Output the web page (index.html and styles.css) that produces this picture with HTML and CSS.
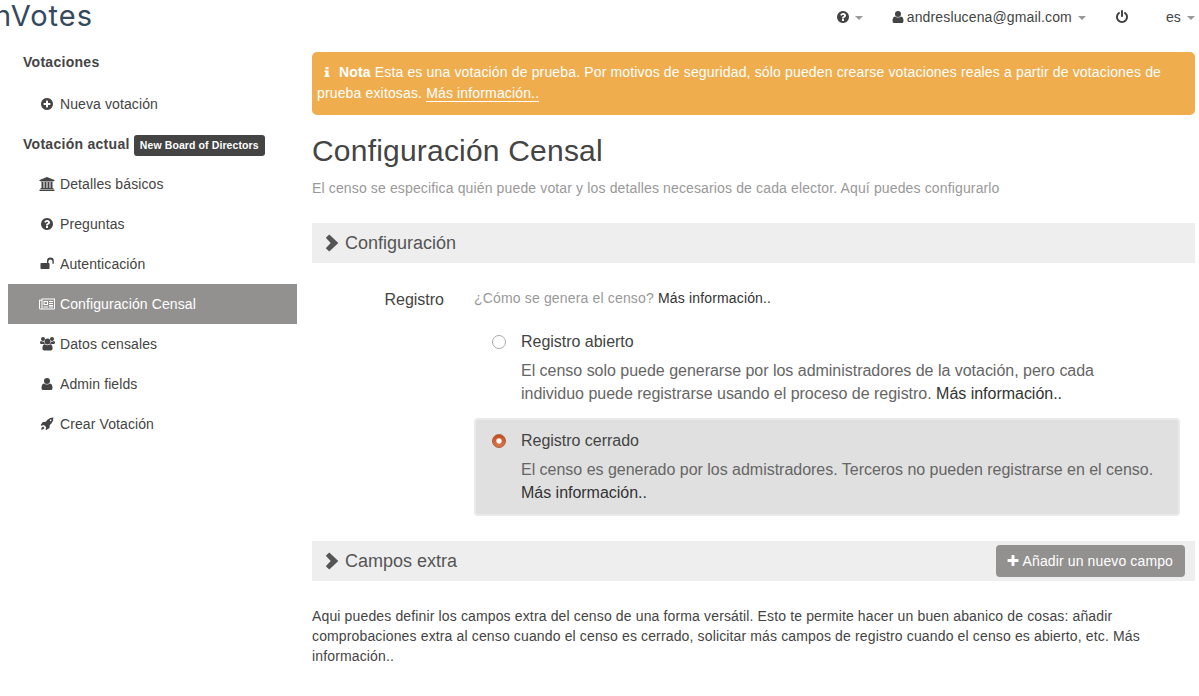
FILE: index.html
```html
<!DOCTYPE html>
<html lang="es">
<head>
<meta charset="utf-8">
<title>nVotes - Configuración Censal</title>
<link rel="stylesheet" href="styles.css">
</head>
<body>
<svg class="sprite" aria-hidden="true">
  <symbol id="question" viewBox="0 0 1792 1792"><path d="M1024 1376v-192q0-14-9-23t-23-9h-192q-14 0-23 9t-9 23v192q0 14 9 23t23 9h192q14 0 23-9t9-23zm256-672q0-88-55.500-163t-138.500-116-170-41q-243 0-371 213-15 24 8 42l132 100q7 6 19 6 16 0 25-12 53-68 86-92 34-24 86-24 48 0 85.500 26t37.500 59q0 38-20 61t-68 45q-63 28-115.500 86.500t-52.500 125.500v36q0 14 9 23t23 9h192q14 0 23-9t9-23q0-19 21.500-49.500t54.500-49.500q32-18 49-28.500t46-35 44.500-48 28-60.500 12.500-81zm384 192q0 209-103 385.500t-279.500 279.500-385.500 103-385.500-103-279.500-279.500-103-385.500 103-385.500 279.500-279.500 385.500-103 385.500 103 279.500 279.500 103 385.500z"/></symbol>
  <symbol id="plus-circle" viewBox="0 0 1792 1792"><path d="M1344 960v-128q0-26-19-45t-45-19h-256v-256q0-26-19-45t-45-19h-128q-26 0-45 19t-19 45v256h-256q-26 0-45 19t-19 45v128q0 26 19 45t45 19h256v256q0 26 19 45t45 19h128q26 0 45-19t19-45v-256h256q26 0 45-19t19-45zm320-64q0 209-103 385.500t-279.500 279.500-385.500 103-385.500-103-279.500-279.500-103-385.500 103-385.500 279.500-279.500 385.500-103 385.500 103 279.500 279.500 103 385.500z"/></symbol>
  <symbol id="power" viewBox="0 0 1792 1792"><path d="M1664 896q0 156-61 298t-164 245-245 164-298 61-298-61-245-164-164-245-61-298q0-182 80.500-343t226.500-270q43-32 95.500-25t83.500 50q32 42 24.500 94.500t-49.500 84.500q-98 74-151.500 181t-53.500 228q0 104 40.500 198.500t109.500 163.500 163.500 109.500 198.500 40.500 198.500-40.500 163.500-109.500 109.500-163.500 40.500-198.500q0-121-53.500-228t-151.500-181q-42-32-49.500-84.500t24.500-94.500q31-43 84-50t95 25q146 109 226.500 270t80.500 343zm-640-768v640q0 52-38 90t-90 38-90-38-38-90v-640q0-52 38-90t90-38 90 38 38 90z"/></symbol>
  <symbol id="user" viewBox="0 0 12 14"><path d="M11.500 10.900q0 .9-.5 1.500t-1.200.6H2.200q-.7 0-1.200-.6t-.5-1.500q0-4.100 2.500-4.500 1.300 1 3 1t3-1q2.500.4 2.500 4.500zM9 4a3 3 0 1 1-6 0 3 3 0 0 1 6 0z"/></symbol>
  <symbol id="plus" viewBox="0 0 1792 1792"><path d="M1600 736v192q0 40-28 68t-68 28h-416v416q0 40-28 68t-68 28h-192q-40 0-68-28t-28-68v-416h-416q-40 0-68-28t-28-68v-192q0-40 28-68t68-28h416v-416q0-40 28-68t68-28h192q40 0 68 28t28 68v416h416q40 0 68 28t28 68z"/></symbol>
  <symbol id="bank" viewBox="0 0 16 14"><path d="M8 0l7.500 3v1h-1v.6h-13V4h-1V3zM2.500 5h2v6h1V5h2v6h1V5h2v6h1V5h2v6h.5q.5 0 .5.500v.5H1.500v-.5q0-.5.500-.5h.5zM1 12.500h14q.5 0 .5.500v1H.5v-1q0-.5.500-.5z"/></symbol>
  <symbol id="unlock" viewBox="0 0 14 14"><path d="M1.300 6H7V4a3.400 3.400 0 0 1 6.800 0v2.300q0 .5-.7.500t-.7-.5V4A2.050 2.050 0 0 0 8.400 4v2h.4q.7 0 .7.700v4.600q0 .7-.7.700H1.300q-.8 0-.8-.7V6.700q0-.7.800-.7z"/></symbol>
  <symbol id="news" viewBox="0 0 16 12"><path fill-rule="evenodd" d="M2.500.5H16v9.700q0 1.300-1.300 1.300H1.500Q0 11.500 0 10V1.700h2.500zM1 2.700V10a.75.750 0 0 0 1.500 0V2.700zm2.500-1.200v9h11q.5 0 .5-.5V1.500zM4.500 3H9v4H4.500zm1 1v2H8V4zM10 3h4v1h-4zm0 2h4v1h-4zm0 2h4v1h-4zM4.500 8.500H9v1H4.500zm5.500 0h4v1h-4z"/></symbol>
  <symbol id="group" viewBox="0 0 15 14"><circle cx="3" cy="2" r="2"/><circle cx="12" cy="2" r="2"/><circle cx="7.500" cy="4.500" r="2.900"/><path d="M1 4q2 1.200 3.200.6-.1 1.500.8 2.400H1.500Q0 7 0 5.700 0 4.200 1 4zm13 0q-2 1.200-3.200.6.100 1.500-.8 2.400h3.500Q15 7 15 5.700 15 4.200 14 4zM4.800 7.200Q7.500 9.300 10.200 7.200q2.400.2 2.400 4.300 0 2-1.900 2H4.300q-1.900 0-1.900-2 0-4.100 2.400-4.300z"/></symbol>
  <symbol id="rocket" viewBox="0 0 14 14"><path fill-rule="evenodd" d="M13.300.6q.2 4.500-3.500 7.500l-.3 3-3.200 2-.7-.5.600-2.300-2.300-2.300-2.600.7-.6-.7L2.800 5l3-.3Q9 .6 13.300.6zM10.600 2.500a.8.800 0 1 0 .02 0zM3 9.500l1.500 1.500q-.8 1.500-3.500 1.700Q1.500 10 3 9.500z"/></symbol>
  <symbol id="info" viewBox="0 0 6 12"><path d="M1.500 1h3v2.300h-3zM.5 4.600h4v5h1v1.500h-5V9.600h1V6.100h-1z"/></symbol>
  <symbol id="chevron" viewBox="0 0 14 18"><path d="M4.300.5 13.300 9l-9 8.500L.8 14.200 5.700 9 .8 3.800z"/></symbol>
</svg>

<header class="topbar">
  <div class="logo">nVotes</div>
  <nav class="top-links">
    <a class="help"><svg class="icon"><use href="#question"/></svg><i class="caret"></i></a>
    <a class="account"><svg class="icon"><use href="#user"/></svg><span>andreslucena@gmail.com</span><i class="caret"></i></a>
    <a class="logout"><svg class="icon"><use href="#power"/></svg></a>
    <a class="lang"><span>es</span><i class="caret"></i></a>
  </nav>
</header>

<div class="page">
  <aside class="sidebar">
    <div class="side-title first">Votaciones</div>
    <a class="side-item"><svg class="icon"><use href="#plus-circle"/></svg>Nueva votación</a>
    <div class="side-title">Votación actual <span class="label">New Board of Directors</span></div>
    <a class="side-item"><svg class="icon wide"><use href="#bank"/></svg>Detalles básicos</a>
    <a class="side-item"><svg class="icon"><use href="#question"/></svg>Preguntas</a>
    <a class="side-item"><svg class="icon"><use href="#unlock"/></svg>Autenticación</a>
    <a class="side-item active"><svg class="icon wide"><use href="#news"/></svg>Configuración Censal</a>
    <a class="side-item"><svg class="icon group"><use href="#group"/></svg>Datos censales</a>
    <a class="side-item"><svg class="icon"><use href="#user"/></svg>Admin fields</a>
    <a class="side-item"><svg class="icon"><use href="#rocket"/></svg>Crear Votación</a>
  </aside>

  <main class="content">
    <div class="alert"><svg class="info"><use href="#info"/></svg><b>Nota</b> Esta es una votación de prueba. Por motivos de seguridad, sólo pueden crearse votaciones reales a partir de votaciones de<br>prueba exitosas. <a class="alert-link">Más información..</a></div>
    <h1>Configuración Censal</h1>
    <p class="lead">El censo se especifica quién puede votar y los detalles necesarios de cada elector. Aquí puedes configurarlo</p>

    <h2 class="section"><svg class="chevron"><use href="#chevron"/></svg>Configuración</h2>
    <div class="field">
      <div class="field-label">Registro</div>
      <div class="field-body">
        <p class="hint">¿Cómo se genera el censo? <a>Más información..</a></p>
        <div class="option">
          <span class="radio"></span>
          <div>
            <div class="option-title">Registro abierto</div>
            <p>El censo solo puede generarse por los administradores de la votación, pero cada<br>individuo puede registrarse usando el proceso de registro. <a>Más información..</a></p>
          </div>
        </div>
        <div class="option selected">
          <span class="radio checked"></span>
          <div>
            <div class="option-title">Registro cerrado</div>
            <p>El censo es generado por los admistradores. Terceros no pueden registrarse en el censo.<br><a>Más información..</a></p>
          </div>
        </div>
      </div>
    </div>

    <h2 class="section"><svg class="chevron"><use href="#chevron"/></svg>Campos extra<button class="add"><svg class="icon"><use href="#plus"/></svg>Añadir un nuevo campo</button></h2>
    <p class="extra">Aqui puedes definir los campos extra del censo de una forma versátil. Esto te permite hacer un buen abanico de cosas: añadir<br>comprobaciones extra al censo cuando el censo es cerrado, solicitar más campos de registro cuando el censo es abierto, etc. Más<br>información..</p>
  </main>
</div>
</body>
</html>
```
FILE: styles.css
```css
* { box-sizing: border-box; }
body {
  margin: 0;
  height: 696px;
  overflow: hidden;
  background: #fff;
  color: #444;
  font: 14px/20px "Liberation Sans", Arial, sans-serif;
  letter-spacing: .14px;
}
h1, h2, p { margin: 0; font-weight: normal; }
svg { fill: currentColor; flex: none; }
.sprite { display: none; }
.icon { width: 14px; height: 14px; }

.topbar { display: flex; justify-content: space-between; height: 42px; }
.logo {
  display: flex;
  justify-content: flex-end;
  width: 93px;
  height: 32px;
  overflow: hidden;
  color: #34495e;
  font: 29px/32px Inter, sans-serif;
  letter-spacing: 1px;
}
.top-links { display: flex; align-items: center; height: 34px; padding-right: 4px; }
.top-links a { display: flex; align-items: center; }
.caret {
  margin: 1px 0 0 6px;
  border: 4px solid transparent;
  border-top-color: #999;
  border-bottom: 0;
}
.help .caret { margin-left: 5px; }
.account { margin-left: 28px; }
.account .icon { margin-right: 2px; }
.logout { margin-left: 29px; }
.lang { margin-left: 37px; }

.page { display: grid; grid-template-columns: 289px 883px; gap: 15px; padding-left: 8px; }
.side-title { height: 40px; padding-left: 15px; font-weight: bold; line-height: 40px; letter-spacing: .28px; }
.side-title.first { height: 42px; }
.label {
  display: inline-block;
  height: 21px;
  padding: 0 6px;
  border-radius: 3px;
  background: #444;
  color: #fff;
  font-size: 10.5px;
  line-height: 21px;
  letter-spacing: .1px;
  vertical-align: top;
  margin-top: 11px;
}
.side-item { display: flex; align-items: center; height: 40px; padding-left: 32px; letter-spacing: .1px; }
.side-item .icon { margin-right: 6px; }
.side-item .wide { width: 16px; margin-left: -1px; margin-right: 5px; }
.side-item .group { width: 15px; margin-right: 5px; }
.side-item.active { background: #939190; color: #fff; }

.alert {
  height: 63px;
  margin-top: 10px;
  padding: 10px 5px;
  border-radius: 5px;
  background: #f0ad4e;
  color: #fff;
  line-height: 21px;
  letter-spacing: .15px;
}
.info { width: 6px; height: 12px; margin: 0 9px 0 7px; vertical-align: -1px; }
.alert-link { border-bottom: 1px solid #fff; }
h1 { margin-top: 19px; font-size: 30px; line-height: 34px; letter-spacing: .2px; }
.lead { margin-top: 10px; color: #999; }
.section {
  display: flex;
  align-items: center;
  height: 40px;
  margin-top: 25px;
  padding: 0 10px 0 13px;
  background: #eee;
  color: #555;
  font-size: 18px;
  letter-spacing: 0;
}
.chevron { width: 14px; height: 18px; margin-right: 6px; }
.field { display: flex; padding-top: 25px; }
.field-label { width: 132px; margin-right: 30px; text-align: right; font-size: 16px; line-height: 24px; letter-spacing: 0; }
.field-body { width: 706px; }
.hint { color: #999; letter-spacing: .16px; }
.hint a, .option a { color: #333; }
.option {
  display: flex;
  height: 98px;
  margin-top: 11px;
  padding: 9px 15px;
  border: 2px solid transparent;
  border-radius: 4px;
  font-size: 16px;
  line-height: 23px;
  letter-spacing: -.02px;
}
.option p { margin-top: 6px; color: #666; }
.option.selected { margin-top: 1px; border-color: #eaeaea; background: #e0e0e0; }
.radio {
  flex: none;
  width: 14px;
  height: 14px;
  margin: 5px 15px 0 1px;
  border: 1px solid #aaa;
  border-radius: 50%;
  background: #fff;
}
.radio.checked {
  border-color: #b55a32;
  background: radial-gradient(circle, #fff 0 2px, #d98a62 3px, transparent 3.500px), linear-gradient(#c44c20, #d8794c);
}
.add {
  display: flex;
  align-items: center;
  height: 32px;
  margin-left: auto;
  padding: 0 12px 0 10px;
  border: 0;
  border-radius: 4px;
  background: #939190;
  color: #fff;
  font: 14px/20px "Liberation Sans", Arial, sans-serif;
  letter-spacing: .12px;
}
.add .icon { margin-right: 3px; }
.extra { margin-top: 25px; }
```
